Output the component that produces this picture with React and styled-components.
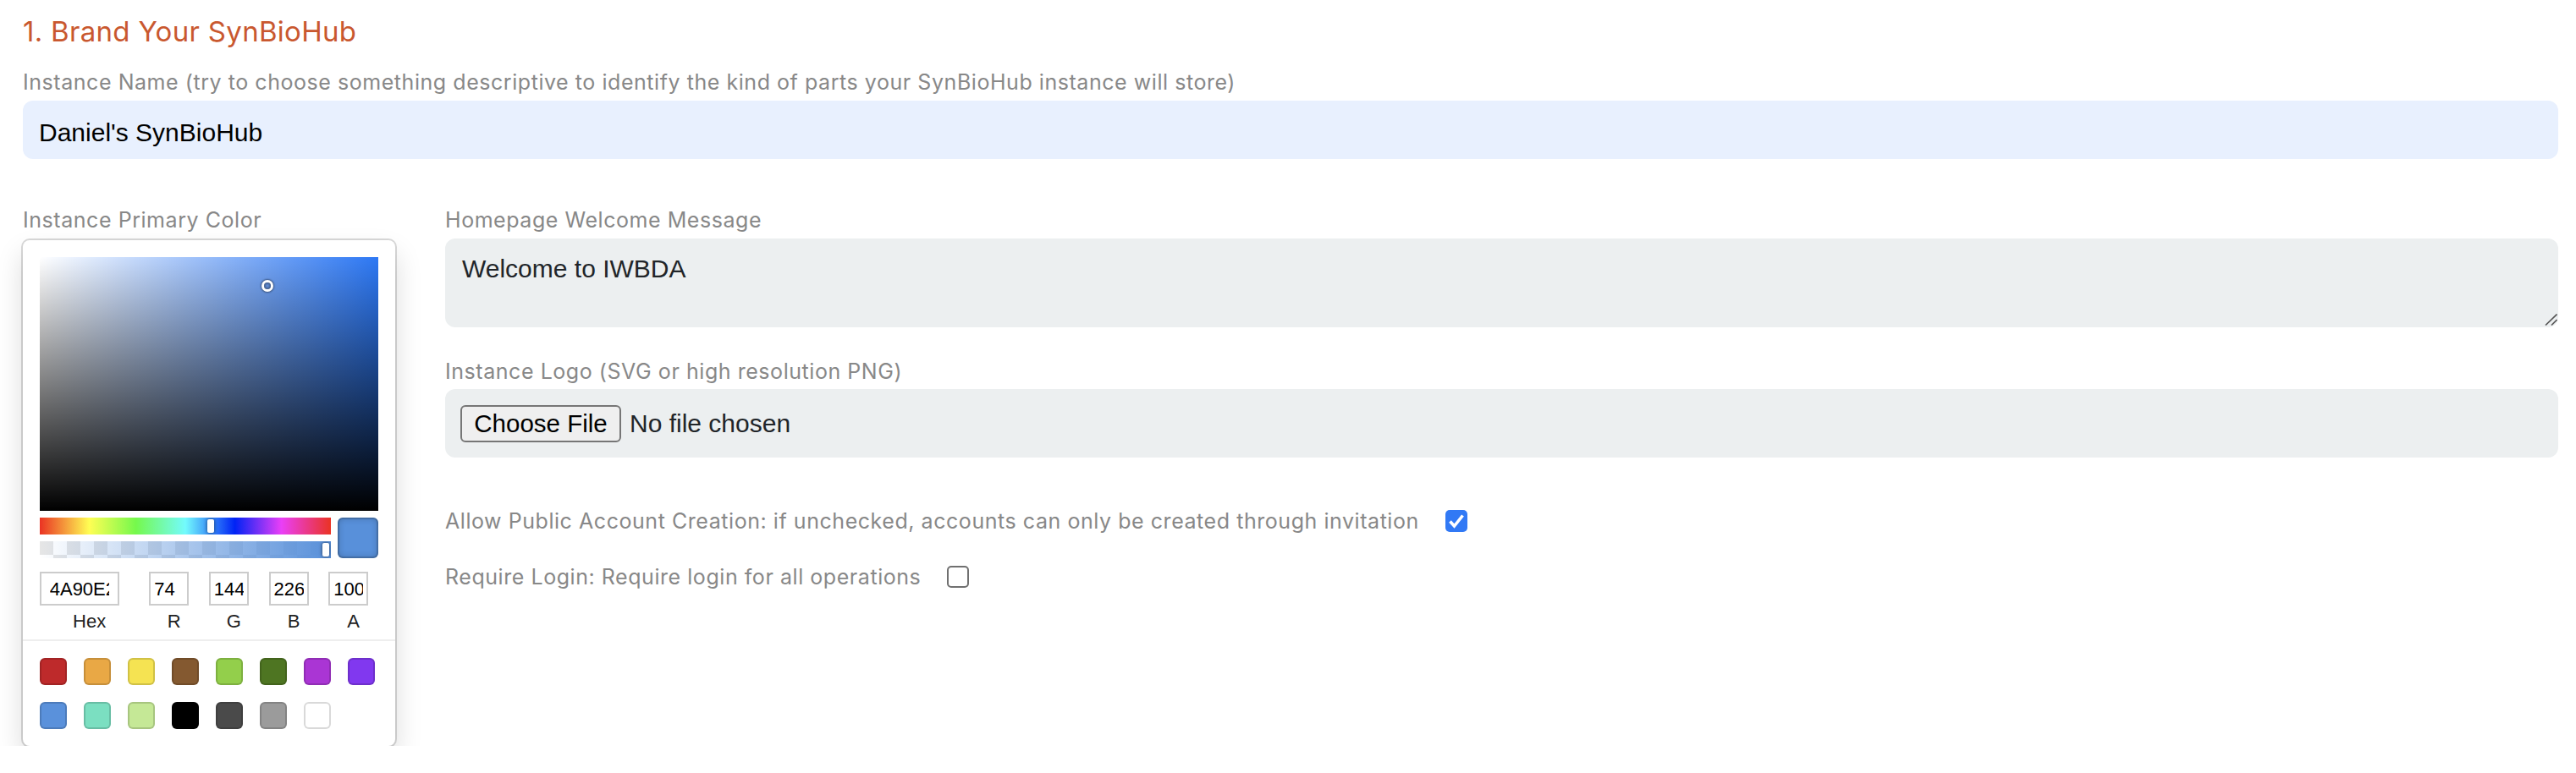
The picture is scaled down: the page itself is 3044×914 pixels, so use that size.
import React from "react";
import styled, { createGlobalStyle } from "styled-components";

const GlobalStyle = createGlobalStyle`
  * {
    box-sizing: border-box;
  }
  body {
    margin: 0;
    background: #fff;
  }
`;

const Page = styled.div`
  padding: 17px 21px 0 27px;
  font-family: Inter, "Liberation Sans", sans-serif;
`;

const Title = styled.h1`
  margin: 0 0 22px;
  font-size: 33px;
  line-height: 40px;
  font-weight: 400;
  letter-spacing: 0.3px;
  color: #c9582f;
`;

const Field = styled.div`
  margin-bottom: ${(p) => p.$gap || 0}px;
`;

const Label = styled.label`
  display: block;
  font-size: 25px;
  line-height: 36px;
  letter-spacing: 0.55px;
  color: #888;
  margin-bottom: ${(p) => (p.$gap === undefined ? 4 : p.$gap)}px;
`;

const TextInput = styled.input`
  display: block;
  width: 100%;
  height: 69px;
  padding: 6px 19px 0;
  border: none;
  border-radius: 12px;
  background: #e8f0fe;
  font-family: "Liberation Sans", Arial, sans-serif;
  font-size: 30px;
  color: #000;
  outline: none;
`;

const Columns = styled.div`
  display: grid;
  grid-template-columns: 440px 1fr;
  column-gap: 59px;
  margin-top: 54px;
  align-items: start;
`;

const Column = styled.div`
  display: flex;
  flex-direction: column;
`;

/* colour picker */
const Picker = styled.div`
  width: 440px;
  padding: 20px 20px 0;
  background: #fff;
  border-radius: 8px;
  box-shadow: 0 0 0 2px rgba(0, 0, 0, 0.15), 0 16px 32px rgba(0, 0, 0, 0.15);
  font-family: "Liberation Sans", Arial, sans-serif;
`;

const Saturation = styled.div`
  position: relative;
  height: 300px;
  overflow: hidden;
  background: linear-gradient(to top, #000, rgba(0, 0, 0, 0)),
    linear-gradient(to right, #fff, rgba(255, 255, 255, 0)), #2d78f4;
`;

const SatPointer = styled.div`
  position: absolute;
  left: ${(p) => p.$x}%;
  top: ${(p) => p.$y}%;
  width: 8px;
  height: 8px;
  border-radius: 50%;
  transform: translate(-4px, -4px);
  box-shadow: 0 0 0 3px #fff, inset 0 0 2px 2px rgba(0, 0, 0, 0.3),
    0 0 2px 4px rgba(0, 0, 0, 0.4);
`;

const Controls = styled.div`
  display: flex;
`;

const Sliders = styled.div`
  flex: 1;
  padding: 8px 0;
`;

const Slider = styled.div`
  position: relative;
  height: 20px;
  overflow: hidden;
  margin-top: ${(p) => (p.$second ? 8 : 0)}px;
  background: ${(p) => p.$bg};
`;

const Track = styled.div`
  position: relative;
  height: 100%;
  margin: 0 ${(p) => p.$inset}px;
`;

const SliderPointer = styled.div`
  position: absolute;
  left: ${(p) => p.$pos}%;
  top: 0;
  width: 8px;
  height: 16px;
  margin-top: 2px;
  border-radius: 2px;
  background: #fff;
  box-shadow: 0 0 4px rgba(0, 0, 0, 0.6);
  transform: translateX(-4px);
`;

const ActiveColor = styled.div`
  width: 48px;
  height: 48px;
  margin: 8px 0 0 8px;
  border-radius: 6px;
  background: ${(p) => p.$color};
  box-shadow: inset 0 0 0 2px rgba(0, 0, 0, 0.15),
    inset 0 0 8px rgba(0, 0, 0, 0.25);
`;

const Fields = styled.div`
  display: flex;
  padding-top: 8px;
`;

const FieldCell = styled.div`
  flex: ${(p) => (p.$wide ? 2 : 1)};
  padding-left: ${(p) => (p.$wide ? 0 : 12)}px;
`;

const SmallInput = styled.input`
  display: block;
  width: 80%;
  height: 40px;
  padding: 8px 10% 6px;
  border: none;
  box-shadow: inset 0 0 0 2px #ccc;
  font-family: "Liberation Sans", Arial, sans-serif;
  font-size: 22px;
  color: #000;
  outline: none;
`;

const SmallLabel = styled.span`
  display: block;
  text-align: center;
  font-size: 22px;
  color: #222;
  padding: 6px 0 8px;
`;

const Presets = styled.div`
  display: flex;
  flex-wrap: wrap;
  margin: 0 -20px;
  padding: 20px 0 0 20px;
  border-top: 2px solid #eee;
`;

const Swatch = styled.div`
  width: 32px;
  height: 32px;
  margin: 0 20px 20px 0;
  border-radius: 6px;
  background: ${(p) => p.$color};
  box-shadow: inset 0 0 0 2px rgba(0, 0, 0, 0.15);
`;

/* right column */
const AreaWrap = styled.div`
  position: relative;
`;

const TextArea = styled.textarea`
  display: block;
  width: 100%;
  height: 105px;
  padding: 13px 20px;
  border: none;
  border-radius: 12px;
  background: #eceff0;
  font-family: "Liberation Sans", Arial, sans-serif;
  font-size: 30px;
  line-height: 45px;
  color: #212529;
  resize: none;
  outline: none;
`;

const Grip = styled.svg`
  position: absolute;
  right: 1px;
  bottom: 2px;
  width: 15px;
  height: 14px;
`;

const FileBox = styled.div`
  display: flex;
  align-items: center;
  height: 81px;
  padding: 0 18px;
  border-radius: 12px;
  background: #eceff0;
  font-family: "Liberation Sans", Arial, sans-serif;
  font-size: 30px;
`;

const FileButton = styled.button`
  width: 190px;
  height: 44px;
  padding: 0;
  border: 2px solid #767676;
  border-radius: 6px;
  background: #efefef;
  font-family: inherit;
  font-size: 29.5px;
  color: #000;
`;

const FileText = styled.span`
  margin-left: 10px;
  color: #212529;
`;

const CheckRow = styled.div`
  display: flex;
  align-items: center;
  font-size: 25px;
  line-height: 36px;
  letter-spacing: 0.55px;
  color: #888;
  margin-top: ${(p) => p.$top || 0}px;
`;

const Box = styled.span`
  display: inline-flex;
  align-items: center;
  justify-content: center;
  flex-shrink: 0;
  width: 26px;
  height: 26px;
  margin-left: 31px;
  border-radius: 5px;
  background: ${(p) => (p.$checked ? "#3179f5" : "#fff")};
  border: ${(p) => (p.$checked ? "none" : "2px solid #707070")};
`;

const presets = [
  "#be2a2b",
  "#e9a845",
  "#f5e352",
  "#845930",
  "#93cf4b",
  "#4e7522",
  "#aa35d4",
  "#8138ef",
  "#5a91db",
  "#7bdfc1",
  "#c5e896",
  "#000000",
  "#4a4a4a",
  "#9b9b9b",
  "#ffffff",
];

const rgb = { r: 74, g: 144, b: 226, a: 100 };
const max = Math.max(rgb.r, rgb.g, rgb.b);
const min = Math.min(rgb.r, rgb.g, rgb.b);
const sat = ((max - min) / max) * 100;
const val = (max / 255) * 100;
const hue = 60 * (4 + (rgb.r - rgb.g) / (max - min));

const hueBg =
  "linear-gradient(to right, #ea3323 0%, #fffe54 17%, #75f94c 33%, #73fbfd 50%, #0023f5 67%, #ea3ff7 83%, #ea3323 100%)";
const alphaBg =
  "linear-gradient(to right, rgba(88,144,218,0), #5890da), repeating-conic-gradient(#fff 0 25%, #e6e6e6 0 50%) 0 0 / 32px 32px";

const Checkbox = ({ checked }) => (
  <Box $checked={checked}>
    {checked && (
      <svg width="26" height="26" viewBox="0 0 26 26">
        <polyline
          points="5.5,13.5 10.5,19 20.5,6.5"
          fill="none"
          stroke="#fff"
          strokeWidth="3.6"
        />
      </svg>
    )}
  </Box>
);

const ColorPicker = () => (
  <Picker>
    <Saturation>
      <SatPointer $x={sat} $y={100 - val} />
    </Saturation>
    <Controls>
      <Sliders>
        <Slider $bg={hueBg}>
          <Track $inset={4}>
            <SliderPointer $pos={(hue * 100) / 360} />
          </Track>
        </Slider>
        <Slider $bg={alphaBg} $second>
          <Track $inset={6}>
            <SliderPointer $pos={rgb.a} />
          </Track>
        </Slider>
      </Sliders>
      <ActiveColor $color="#5890da" />
    </Controls>
    <Fields>
      <FieldCell $wide>
        <SmallInput defaultValue="4A90E2" />
        <SmallLabel>Hex</SmallLabel>
      </FieldCell>
      {["r", "g", "b", "a"].map((k) => (
        <FieldCell key={k}>
          <SmallInput defaultValue={rgb[k]} />
          <SmallLabel>{k.toUpperCase()}</SmallLabel>
        </FieldCell>
      ))}
    </Fields>
    <Presets>
      {presets.map((c) => (
        <Swatch key={c} $color={c} />
      ))}
    </Presets>
  </Picker>
);

const App = () => (
  <>
    <GlobalStyle />
    <Page>
      <Title>1. Brand Your SynBioHub</Title>
      <Field>
        <Label>
          Instance Name (try to choose something descriptive to identify the
          kind of parts your SynBioHub instance will store)
        </Label>
        <TextInput defaultValue="Daniel's SynBioHub" />
      </Field>
      <Columns>
        <Column>
          <Label $gap={6}>Instance Primary Color</Label>
          <ColorPicker />
        </Column>
        <Column>
          <Field $gap={34}>
            <Label>Homepage Welcome Message</Label>
            <AreaWrap>
              <TextArea defaultValue="Welcome to IWBDA" />
              <Grip viewBox="0 0 15 14">
                <line x1="14.5" y1="0.5" x2="1" y2="13.5" stroke="#555" strokeWidth="1.6" />
                <line x1="14.5" y1="7" x2="8" y2="13.5" stroke="#555" strokeWidth="1.6" />
              </Grip>
            </AreaWrap>
          </Field>
          <Field $gap={57}>
            <Label $gap={3}>Instance Logo (SVG or high resolution PNG)</Label>
            <FileBox>
              <FileButton type="button">Choose File</FileButton>
              <FileText>No file chosen</FileText>
            </FileBox>
          </Field>
          <CheckRow>
            Allow Public Account Creation: if unchecked, accounts can only be
            created through invitation
            <Checkbox checked />
          </CheckRow>
          <CheckRow $top={30}>
            Require Login: Require login for all operations
            <Checkbox />
          </CheckRow>
        </Column>
      </Columns>
    </Page>
  </>
);

export default App;
